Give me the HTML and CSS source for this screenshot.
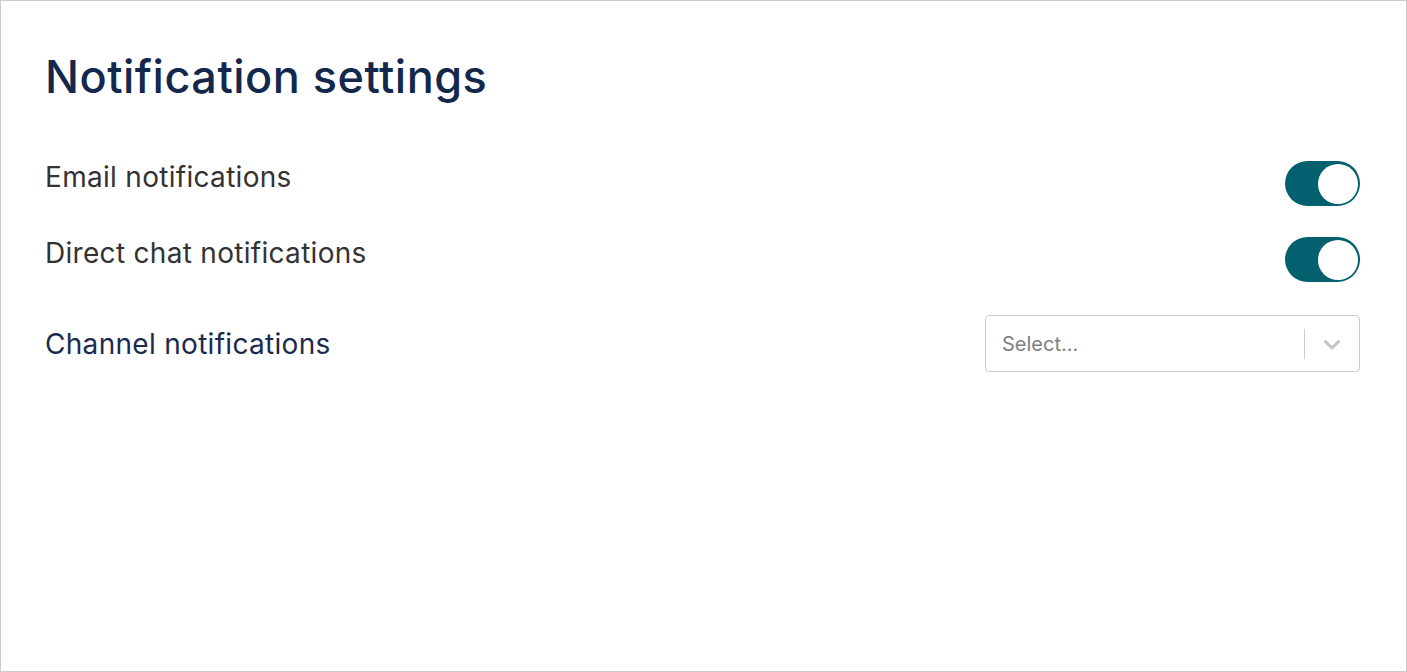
FILE: index.html
```html
<!DOCTYPE html>
<html>
<head>
<meta charset="utf-8">
<link rel="stylesheet" href="styles.css">
</head>
<body>
<div class="page">
  <h1 class="title">Notification settings</h1>
  <div class="row row-toggle">
    <span class="label">Email notifications</span>
    <span class="toggle"><span class="knob"></span></span>
  </div>
  <div class="row row-toggle">
    <span class="label">Direct chat notifications</span>
    <span class="toggle"><span class="knob"></span></span>
  </div>
  <div class="row row-select">
    <span class="label label-navy">Channel notifications</span>
    <div class="select">
      <span class="placeholder">Select...</span>
      <span class="indicators">
        <span class="sep"></span>
        <svg class="chev" width="28" height="28" viewBox="0 0 20 20"><path fill="#c8c8c8" d="M4.516 7.548c0.436-0.446 1.043-0.481 1.576 0l3.908 3.747 3.908-3.747c0.533-0.481 1.141-0.446 1.574 0 0.436 0.445 0.408 1.197 0 1.615-0.406 0.418-4.695 4.502-4.695 4.502-0.217 0.223-0.502 0.335-0.787 0.335s-0.57-0.112-0.789-0.335c0 0-4.287-4.084-4.695-4.502s-0.436-1.170 0-1.615z"/></svg>
      </span>
    </div>
  </div>
</div>
</body>
</html>
```
FILE: styles.css
```css
html, body { margin: 0; padding: 0; }
body { background: #fff; font-family: Inter, "Noto Sans", sans-serif; }
.page {
  box-sizing: border-box;
  width: 1407px;
  height: 672px;
  border: 1px solid #cccccc;
  padding: 48px 46px 0 44px;
}
.title {
  margin: 0 0 56px 0;
  font-size: 45px;
  font-weight: 500;
  line-height: 56px;
  color: #13284c;
  letter-spacing: 0.5px;
}
.row {
  display: flex;
  justify-content: space-between;
}
.row-toggle { align-items: flex-start; height: 76px; }
.row-select { align-items: center; margin-top: 2px; }
.label {
  font-size: 28px;
  line-height: 32px;
  color: #333333;
  letter-spacing: 0.3px;
}
.label-navy { color: #1a2b4f; }
.toggle {
  box-sizing: border-box;
  width: 75px;
  height: 45px;
  border-radius: 23px;
  background: #03606e;
  padding: 2.5px;
  display: flex;
  justify-content: flex-end;
}
.knob {
  width: 40px;
  height: 40px;
  border-radius: 50%;
  background: #fff;
}
.select {
  box-sizing: border-box;
  width: 375px;
  height: 57px;
  border: 1px solid #cccccc;
  border-radius: 4px;
  display: flex;
  align-items: center;
  justify-content: space-between;
  padding-left: 16px;
}
.placeholder {
  font-size: 20px;
  color: #808080;
}
.indicators { display: flex; align-items: center; height: 100%; }
.sep { width: 1px; height: 30px; background: #cccccc; margin-right: 13px; }
.chev { margin-right: 13px; display: block; }
```
